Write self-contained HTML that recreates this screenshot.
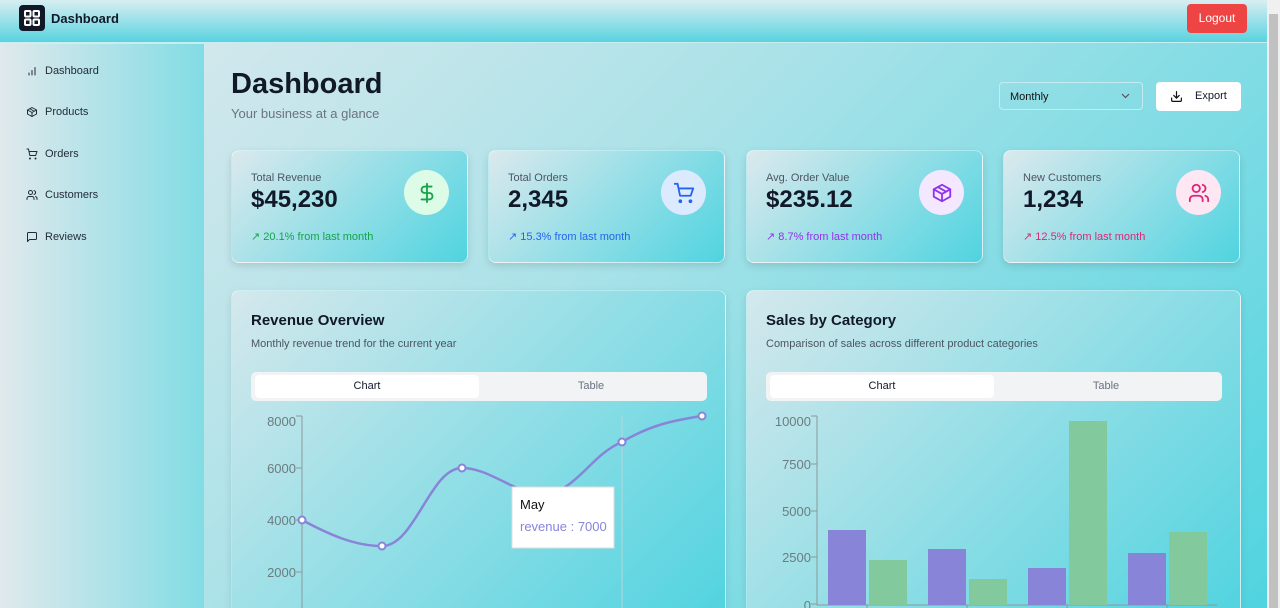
<!DOCTYPE html>
<html style="width:1280px;height:608px;overflow:hidden"><head><meta charset="utf-8"><style>
*{box-sizing:border-box;margin:0;padding:0}
body{width:1280px;height:608px;overflow:hidden;font-family:"Liberation Sans",sans-serif;background:linear-gradient(135deg,#e2eaee 0%,#a9e2e8 45%,#4fd4e0 100%);position:relative;color:#111827}
.hdr{position:absolute;left:0;top:0;width:1267px;height:43px;background:linear-gradient(180deg,#d8eef1,#58d3e0);border-bottom:1px solid #c8eef2}
.logo{position:absolute;left:19px;top:5px;width:26px;height:26px;background:#111827;border-radius:4px}
.hdr .t{position:absolute;left:51px;top:11px;font-weight:bold;font-size:13px}
.logout{position:absolute;left:1187px;top:4px;width:60px;height:29px;background:#ef4444;color:#fff;border-radius:4px;font-size:12px;text-align:center;line-height:29px}
.side{position:absolute;left:0;top:44px;width:204px;height:564px;background:linear-gradient(90deg,#e0e9ec,#82dce4)}
.nav{position:absolute;left:26px;font-size:11px;color:#1f2937;display:flex;align-items:center;gap:7px}
.nav svg{width:12px;height:12px;fill:none;stroke:#1f2937;stroke-width:2;stroke-linecap:round;stroke-linejoin:round}
.sb{position:absolute;left:1267px;top:0;width:13px;height:608px;background:#f0f0f0}
.sb div{position:absolute;left:2px;top:14px;width:9px;height:594px;background:#c1c1c1}
h1{position:absolute;left:231px;top:68px;font-size:29px;font-weight:bold}
.sub{position:absolute;left:231px;top:106px;font-size:13px;color:#6b7280}
.sel{position:absolute;left:999px;top:82px;width:144px;height:28px;border:1px solid #c4ecf0;border-radius:4px;font-size:11px;padding:8px 10px;color:#111}
.exp{position:absolute;left:1156px;top:82px;width:85px;height:29px;background:#fff;border-radius:4px;font-size:11px;padding-left:39px;line-height:29px}
.card{position:absolute;top:150px;width:237px;height:113px;border-radius:8px;background:linear-gradient(135deg,#dbe9ed,#4fd4e0);box-shadow:0 3px 8px rgba(0,0,0,.12);border:1px solid rgba(255,255,255,.5)}
.card .l{position:absolute;left:19px;top:21px;font-size:11px;color:#4b5563}
.card .v{position:absolute;left:19px;top:35px;font-size:24px;font-weight:bold}
.card .c{position:absolute;left:19px;top:79px;font-size:11px}
.card .ic{position:absolute;left:172px;top:19px;width:45px;height:45px;border-radius:50%;display:flex;align-items:center;justify-content:center}
.ic svg{width:22px;height:22px;fill:none;stroke-width:2;stroke-linecap:round;stroke-linejoin:round}
.panel{position:absolute;top:290px;width:495px;height:318px;border-radius:8px 8px 0 0;background:linear-gradient(135deg,#d4e8ec,#52d4e0);border:1px solid rgba(255,255,255,.5);border-bottom:none;box-shadow:0 3px 8px rgba(0,0,0,.1)}
.panel h2{position:absolute;left:19px;top:21px;font-size:15px;font-weight:bold}
.panel .d{position:absolute;left:19px;top:47px;font-size:11px;color:#4b5563}
.tabs{position:absolute;left:19px;top:81px;width:456px;height:29px;background:#f1f3f5;border-radius:5px}
.tabs .a{position:absolute;left:4px;top:3px;width:224px;height:23px;background:#fff;border-radius:4px;text-align:center;line-height:23px;font-size:11px}
.tabs .b{position:absolute;left:228px;top:3px;width:224px;height:23px;text-align:center;line-height:23px;font-size:11px;color:#6b7280}
svg.ch{position:absolute;left:0;top:0}
</style></head><body>
<div class="hdr"><div class="logo"><svg width="26" height="26" viewBox="0 0 26 26" fill="none" stroke="#fff" stroke-width="2"><rect x="6" y="6" width="5.5" height="5.5" rx="1"/><rect x="14.5" y="6" width="5.5" height="5.5" rx="1"/><rect x="6" y="14.5" width="5.5" height="5.5" rx="1"/><rect x="14.5" y="14.5" width="5.5" height="5.5" rx="1"/></svg></div><div class="t">Dashboard</div><div class="logout">Logout</div></div>
<div class="side">
<div class="nav" style="top:21px"><svg viewBox="0 0 24 24"><path d="M6 20v-4M12 20v-9M18 20V5"/></svg>Dashboard</div>
<div class="nav" style="top:62px"><svg viewBox="0 0 24 24"><path d="M21 8l-9-5-9 5v8l9 5 9-5z"/><path d="M3 8l9 5 9-5M12 13v8M7.5 5.5l9 5"/></svg>Products</div>
<div class="nav" style="top:104px"><svg viewBox="0 0 24 24"><circle cx="8" cy="21" r="1"/><circle cx="19" cy="21" r="1"/><path d="M2 2h3l2.7 13h11.6L22 7H6"/></svg>Orders</div>
<div class="nav" style="top:145px"><svg viewBox="0 0 24 24"><circle cx="9" cy="7" r="4"/><path d="M2 21v-2a4 4 0 014-4h6a4 4 0 014 4v2M16 3.1a4 4 0 010 7.8M22 21v-2a4 4 0 00-3-3.9"/></svg>Customers</div>
<div class="nav" style="top:187px"><svg viewBox="0 0 24 24"><path d="M21 15a2 2 0 01-2 2H7l-4 4V5a2 2 0 012-2h14a2 2 0 012 2z"/></svg>Reviews</div>
</div>
<div class="sb"><div></div></div>
<h1>Dashboard</h1><div class="sub">Your business at a glance</div>
<div class="sel">Monthly<svg style="position:absolute;right:12px;top:10px" width="9" height="6" viewBox="0 0 9 6" fill="none" stroke="#555" stroke-width="1.2"><path d="M1 1l3.5 3.5L8 1"/></svg></div>
<div class="exp"><svg style="position:absolute;left:14px;top:8px" width="13" height="13" viewBox="0 0 24 24" fill="none" stroke="#111" stroke-width="2.2" stroke-linecap="round"><path d="M12 3v12M7 10l5 5 5-5M3 15v4a2 2 0 002 2h14a2 2 0 002-2v-4"/></svg>Export</div>

<div class="card" style="left:231px"><div class="l">Total Revenue</div><div class="v">$45,230</div><div class="c" style="color:#16a34a">↗ 20.1% from last month</div><div class="ic" style="background:#dcfce7"><svg viewBox="0 0 24 24" stroke="#16a34a"><path d="M12 2v20M17 5H9.5a3.5 3.5 0 000 7h5a3.5 3.5 0 010 7H6"/></svg></div></div>
<div class="card" style="left:488px"><div class="l">Total Orders</div><div class="v">2,345</div><div class="c" style="color:#2563eb">↗ 15.3% from last month</div><div class="ic" style="background:#dbeafe"><svg viewBox="0 0 24 24" stroke="#2563eb"><circle cx="8" cy="21" r="1"/><circle cx="19" cy="21" r="1"/><path d="M2 2h3l2.7 13h11.6L22 7H6"/></svg></div></div>
<div class="card" style="left:746px"><div class="l">Avg. Order Value</div><div class="v">$235.12</div><div class="c" style="color:#9333ea">↗ 8.7% from last month</div><div class="ic" style="background:#f3e8ff"><svg viewBox="0 0 24 24" stroke="#9333ea"><path d="M21 8l-9-5-9 5v8l9 5 9-5z"/><path d="M3 8l9 5 9-5M12 13v8M7.5 5.5l9 5"/></svg></div></div>
<div class="card" style="left:1003px"><div class="l">New Customers</div><div class="v">1,234</div><div class="c" style="color:#db2777">↗ 12.5% from last month</div><div class="ic" style="background:#fce7f3"><svg viewBox="0 0 24 24" stroke="#db2777"><circle cx="9" cy="7" r="4"/><path d="M2 21v-2a4 4 0 014-4h6a4 4 0 014 4v2M16 3.1a4 4 0 010 7.8M22 21v-2a4 4 0 00-3-3.9"/></svg></div></div>

<div class="panel" style="left:231px"><h2>Revenue Overview</h2><div class="d">Monthly revenue trend for the current year</div><div class="tabs"><div class="a">Chart</div><div class="b">Table</div></div></div>
<div class="panel" style="left:746px"><h2>Sales by Category</h2><div class="d">Comparison of sales across different product categories</div><div class="tabs"><div class="a">Chart</div><div class="b">Table</div></div></div>

<svg class="ch" width="1280" height="608" font-family="Liberation Sans" font-size="13" fill="#6b7d80">
<g stroke="#8a9a9c" fill="none"><path d="M302 416v192M296 416h6M296 468h6M296 520h6M296 572h6"/><path d="M622 416v192" stroke="#b9d6da"/></g>
<text x="296" y="426" text-anchor="end">8000</text><text x="296" y="473" text-anchor="end">6000</text><text x="296" y="525" text-anchor="end">4000</text><text x="296" y="577" text-anchor="end">2000</text>
<path d="M302 520C330 535 355 546 382 546C415 546 430 468 462 468C490 468 515 494 542 494C575 494 590 455 622 442C650 425 675 420 702 416" fill="none" stroke="#8884d8" stroke-width="2.5"/>
<g fill="#fff" stroke="#8884d8" stroke-width="2"><circle cx="302" cy="520" r="3.5"/><circle cx="382" cy="546" r="3.5"/><circle cx="462" cy="468" r="3.5"/><circle cx="622" cy="442" r="3.5"/><circle cx="702" cy="416" r="3.5"/></g>
<rect x="512" y="487" width="102" height="61" fill="#fff" stroke="#ddd"/>
<text x="520" y="509" fill="#111">May</text><text x="520" y="531" fill="#8884d8">revenue : 7000</text>
<g stroke="#8a9a9c" fill="none"><path d="M817 416v189h400M811 416h6M811 464h6M811 511h6M811 557h6M811 604h6M867 605v6M967 605v6M1067 605v6M1167 605v6"/></g>
<text x="811" y="426" text-anchor="end">10000</text><text x="811" y="469" text-anchor="end">7500</text><text x="811" y="516" text-anchor="end">5000</text><text x="811" y="562" text-anchor="end">2500</text><text x="811" y="610" text-anchor="end">0</text>
<g fill="#8884d8"><rect x="828" y="530" width="38" height="75"/><rect x="928" y="549" width="38" height="56"/><rect x="1028" y="568" width="38" height="37"/><rect x="1128" y="553" width="38" height="52"/></g>
<g fill="#82ca9d"><rect x="869" y="560" width="38" height="45"/><rect x="969" y="579" width="38" height="26"/><rect x="1069" y="421" width="38" height="184"/><rect x="1169" y="532" width="38" height="73"/></g>
</svg>
</body></html>
